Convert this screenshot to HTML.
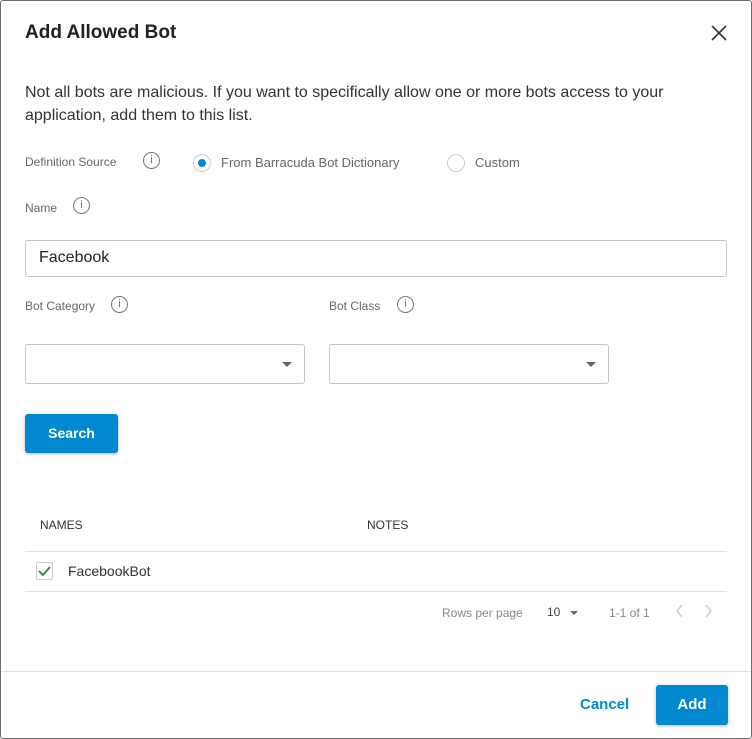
<!DOCTYPE html>
<html><head><style>
*{box-sizing:border-box;margin:0;padding:0}
body{width:752px;height:739px;background:#fff;font-family:"Liberation Sans",sans-serif;position:relative;overflow:hidden;color:#212121}
.frame{position:absolute;left:0;top:0;width:752px;height:739px;border:1px solid #6e6e6e;border-radius:3px}
.a{position:absolute}
.lbl{font-size:12px;color:#666}
.info{position:absolute;width:17px;height:17px;border:1.5px solid #777;border-radius:50%;font-size:11px;color:#777;text-align:center;line-height:14px;font-family:"Liberation Sans",sans-serif}
.sel{position:absolute;height:40px;width:280px;border:1px solid #c4c4c4;border-radius:3px}
.sel:after{content:"";position:absolute;right:12px;top:17px;border-left:5px solid transparent;border-right:5px solid transparent;border-top:5px solid #666}
.hr{position:absolute;height:1px;background:#e0e0e0}
</style></head><body>
<div class="frame"></div>
<div class="a" style="left:25px;top:22px;font-size:19px;font-weight:bold;color:#212121">Add Allowed Bot</div>
<svg class="a" style="left:711px;top:25px" width="16" height="16"><path d="M1 1L15 15M15 1L1 15" stroke="#333" stroke-width="1.6"/></svg>
<div class="a" style="left:25px;top:81px;font-size:16px;line-height:23px;color:#333;width:700px">Not all bots are malicious. If you want to specifically allow one or more bots access to your application, add them to this list.</div>
<div class="a lbl" style="left:25px;top:155px">Definition Source</div>
<div class="info" style="left:143px;top:152px">i</div>
<div class="a" style="left:193px;top:154px;width:18px;height:18px;border:1px solid #ccc;border-radius:50%"><div style="margin:4px;width:8px;height:8px;border-radius:50%;background:#0088d1"></div></div>
<div class="a" style="left:221px;top:155px;font-size:13px;color:#666">From Barracuda Bot Dictionary</div>
<div class="a" style="left:447px;top:154px;width:18px;height:18px;border:1px solid #ccc;border-radius:50%"></div>
<div class="a" style="left:475px;top:155px;font-size:13px;color:#666">Custom</div>
<div class="a lbl" style="left:25px;top:201px">Name</div>
<div class="info" style="left:73px;top:197px">i</div>
<div class="a" style="left:25px;top:240px;width:702px;height:37px;border:1px solid #c4c4c4;border-radius:3px;font-size:16px;padding:8px 13px;color:#222">Facebook</div>
<div class="a lbl" style="left:25px;top:299px">Bot Category</div>
<div class="info" style="left:111px;top:296px">i</div>
<div class="a lbl" style="left:329px;top:299px">Bot Class</div>
<div class="info" style="left:397px;top:296px">i</div>
<div class="sel" style="left:25px;top:344px"></div>
<div class="sel" style="left:329px;top:344px"></div>
<div class="a" style="left:25px;top:414px;width:93px;height:39px;background:#0088d1;border-radius:3px;color:#fff;font-weight:bold;font-size:14px;text-align:center;line-height:39px;box-shadow:0 1px 3px rgba(0,0,0,.3)">Search</div>
<div class="a" style="left:40px;top:518px;font-size:12px;color:#333">NAMES</div>
<div class="a" style="left:367px;top:518px;font-size:12px;color:#333">NOTES</div>
<div class="hr" style="left:25px;top:551px;width:702px"></div>
<div class="a" style="left:36px;top:562px;width:17px;height:18px;border:1px solid #ccc;border-radius:2px"></div>
<svg class="a" style="left:38px;top:565px" width="13" height="12"><path d="M1 6L5 10L12 2" stroke="#2a8a2a" stroke-width="1.8" fill="none"/></svg>
<div class="a" style="left:68px;top:563px;font-size:14px;color:#333">FacebookBot</div>
<div class="hr" style="left:25px;top:591px;width:702px"></div>
<div class="a" style="left:442px;top:606px;font-size:12px;color:#888">Rows per page</div>
<div class="a" style="left:547px;top:605px;font-size:12px;color:#444">10</div>
<div class="a" style="left:570px;top:611px;border-left:4px solid transparent;border-right:4px solid transparent;border-top:4px solid #666"></div>
<div class="a" style="left:609px;top:606px;font-size:12px;color:#888">1-1 of 1</div>
<svg class="a" style="left:674px;top:604px" width="40" height="14"><path d="M8 1L3 7L8 13M32 1L37 7L32 13" stroke="#ccc" stroke-width="1.4" fill="none"/></svg>
<div class="hr" style="left:1px;top:671px;width:750px"></div>
<div class="a" style="left:580px;top:696px;font-size:15px;font-weight:bold;color:#0088d1">Cancel</div>
<div class="a" style="left:656px;top:685px;width:72px;height:40px;background:#0088d1;border-radius:3px;color:#fff;font-weight:bold;font-size:15px;text-align:center;line-height:40px;box-shadow:0 1px 3px rgba(0,0,0,.3)">Add</div>
</body></html>
